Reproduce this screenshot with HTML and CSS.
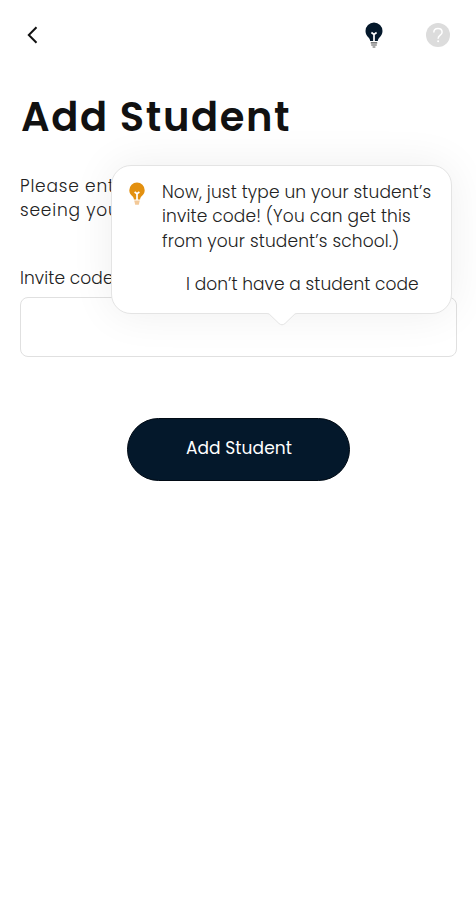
FILE: index.html
```html
<!DOCTYPE html>
<html lang="en">
<head>
    <meta charset="UTF-8">
    <meta name="viewport" content="width=device-width, initial-scale=1.0">
    <title>Add Student</title>
    <link rel="stylesheet" href="styles.css">
</head>
<body>
    <div class="container">
        <!-- Top bar -->
        <header class="topbar">
            <button class="icon-btn" type="button" aria-label="Back">
                <svg width="12" height="18" viewBox="0 0 12 18"><path d="M10.500 1.200L2.800 9l7.700 7.800" fill="none" stroke="#111" stroke-width="2"/></svg>
            </button>
            <div class="topbar-actions">
                <button class="icon-btn" type="button" aria-label="Tips">
                    <svg width="18" height="26" viewBox="0 0 18 26">
                        <path d="M9 .5a8.500 8.500 0 0 0-8.500 8.600c0 3 1.400 4.800 3 6.400.9.900 1.500 2 1.700 3.500h7.600c.2-1.500.8-2.600 1.700-3.500 1.600-1.600 3-3.400 3-6.400A8.500 8.500 0 0 0 9 .5z" fill="#04182b"/>
                        <path d="M6.400 10.500l2.600 2 2.600-2M9 12.500V19" fill="none" stroke="#fff" stroke-width="1.700"/>
                        <path d="M5.800 20.800h6.400M6.200 23h5.600M7.600 25h2.800" stroke="#555" stroke-width="1.200"/>
                    </svg>
                </button>
                <button class="icon-btn" type="button" aria-label="Help">
                    <svg width="24" height="24" viewBox="0 0 24 24">
                        <circle cx="12" cy="12" r="12" fill="#dcdcdc"/>
                        <path d="M7.800 9.500c0-2.400 1.800-4 4.200-4s4.100 1.500 4.100 3.700c0 3-4 3-4 6.500" fill="none" stroke="#fff" stroke-width="1.500"/>
                        <circle cx="12.100" cy="18.200" r="1" fill="#fff"/>
                    </svg>
                </button>
            </div>
        </header>

        <h1>Add Student</h1>
        <p class="intro">Please enter<br>seeing your</p>

        <!-- Invite code form -->
        <form class="student-form">
            <label for="code">Invite code</label>
            <div class="field">
                <input type="text" id="code" name="code">
                <div class="tooltip">
                    <svg class="tip-icon" width="16" height="24" viewBox="0 0 16 24">
                        <path d="M8 .5A7.700 7.700 0 0 0 .3 8.200c0 3 1.500 4.500 2.900 5.900 1 1 1.500 1.900 1.700 3.300h6.200c.2-1.400.7-2.300 1.700-3.300 1.400-1.400 2.900-2.900 2.900-5.900A7.700 7.700 0 0 0 8 .5z" fill="#e3900f"/>
                        <path d="M5.600 10l2.400 1.700 2.400-1.700M8 11.500V18" fill="none" stroke="#fff" stroke-width="1.700"/>
                        <path d="M5.200 18.500h5.600l-1 4.300H6.200z" fill="#f3c998"/>
                    </svg>
                    <div class="tip-body">
                        <p>Now, just type un your student’s<br>invite code! (You can get this<br>from your student’s school.)</p>
                        <a href="#" class="tip-link">I don’t have a student code</a>
                    </div>
                    <svg class="tip-arrow" width="32" height="14" viewBox="0 0 32 14">
                        <path d="M0 0h32v1c-2 0-3 .8-4 1.800l-9 8.700c-2 1.700-4 1.700-6 0L4 2.800C3 1.800 2 1 0 1z" fill="#fff"/>
                        <path d="M0 1.500c2 0 3 .3 4 1.300l9 8.700c2 1.700 4 1.700 6 0l9-8.700c1-1 2-1.300 4-1.300" fill="none" stroke="#e4e4e4"/>
                    </svg>
                </div>
            </div>
            <button class="submit-btn" type="submit">Add Student</button>
        </form>
    </div>
</body>
</html>
```
FILE: styles.css
```css
* {
    box-sizing: border-box;
}

body {
    margin: 0;
    font-family: Poppins, Inter, sans-serif;
    background-color: #fff;
    color: #222;
}

.container {
    min-height: 900px;
    padding: 0 19px 0 20px;
    overflow: hidden;
}

.topbar {
    display: flex;
    align-items: center;
    justify-content: space-between;
    height: 70px;
    padding: 0 7px 0 6px;
}

.topbar-actions {
    display: flex;
    align-items: center;
    gap: 43px;
}

.icon-btn {
    display: flex;
    padding: 0;
    border: none;
    background: none;
    cursor: pointer;
}

h1 {
    margin: 22px 0 0 1px;
    font-size: 40px;
    line-height: 50px;
    font-weight: 600;
    letter-spacing: 1.6px;
    color: #111;
}

.intro {
    margin: 32px 0 0;
    font-size: 17px;
    line-height: 24px;
    font-weight: 300;
    letter-spacing: 0.8px;
}

.student-form {
    display: flex;
    flex-direction: column;
    margin-top: 44px;
}

label {
    font-size: 17px;
    line-height: 24px;
    font-weight: 300;
    letter-spacing: 0.1px;
}

.field {
    position: relative;
    margin-top: 7px;
}

input[type="text"] {
    display: block;
    width: 100%;
    height: 60px;
    padding: 0 14px;
    border: 1px solid #e0e0e0;
    border-radius: 8px;
    background-color: #fff;
}

.tooltip {
    position: absolute;
    right: 5px;
    bottom: 43px;
    display: flex;
    gap: 17px;
    width: 341px;
    height: 149px;
    padding: 14px 10px 0 17px;
    border: 1px solid #e4e4e4;
    border-radius: 20px;
    background-color: #fff;
    box-shadow: 0 0 44px rgba(0, 0, 0, 0.07);
    font-size: 17px;
    line-height: 24.3px;
    font-weight: 300;
    letter-spacing: 0.15px;
    white-space: nowrap;
}

.tip-icon {
    flex: none;
    margin-top: 2px;
}

.tip-body p {
    margin: 0;
}

.tip-link {
    display: block;
    margin: 19px 0 0 24px;
    color: #222;
    text-decoration: none;
    letter-spacing: 0.06px;
}

.tip-arrow {
    position: absolute;
    left: 154px;
    bottom: -13px;
}

.submit-btn {
    align-self: center;
    width: 223px;
    height: 63px;
    margin-top: 61px;
    padding: 0 0 4px 1px;
    border: 1px solid #010a14;
    border-radius: 32px;
    background-color: #04182b;
    color: #fff;
    font-family: inherit;
    font-size: 17px;
    font-weight: 400;
    letter-spacing: 0.1px;
    cursor: pointer;
}
```
